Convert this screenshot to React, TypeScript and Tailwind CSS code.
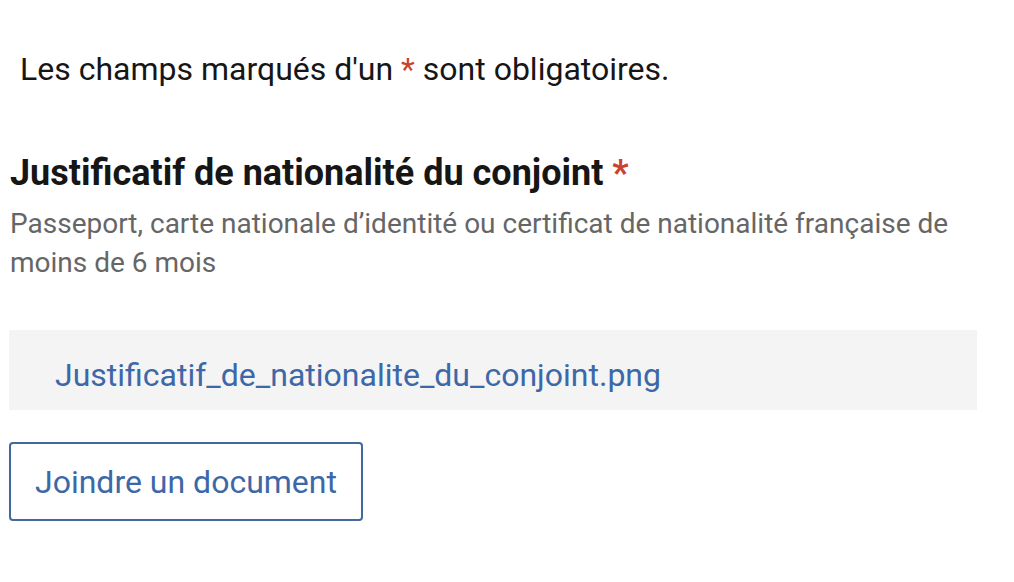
import React from 'react';

const App: React.FC = () => {
  return (
    <div className="min-h-screen bg-white font-['Roboto',sans-serif] pl-[9px] pr-[37px]">
      <p className="pt-[50px] pl-[11px] text-[32px] leading-[38px] text-[#161616]">
        Les champs marqués d'un <span className="text-[#c9432f]">*</span> sont obligatoires.
      </p>

      {/* Pièce justificative */}
      <div className="mt-[63px]">
        <h2 className="pl-px text-[36px] leading-[44px] font-bold text-[#161616]">
          Justificatif de nationalité du conjoint <span className="text-[#c9432f]">*</span>
        </h2>
        <p className="mt-[9px] pl-px text-[28px] leading-[39px] text-[#666666]">
          Passeport, carte nationale d’identité ou certificat de nationalité française de moins de 6 mois
        </p>

        <div className="mt-[48px] h-[80px] bg-[#f4f4f4] pt-[26px] pl-[46px]">
          <a href="#" className="text-[32px] leading-[38px] text-[#3d68a8]">
            Justificatif_de_nationalite_du_conjoint.png
          </a>
        </div>

        <button className="mt-[32px] h-[79px] px-[24px] border-2 border-[#43689c] rounded-[4px] bg-white text-[32px] leading-[38px] text-[#3d68a8]">
          Joindre un document
        </button>
      </div>
    </div>
  );
};

export default App;
